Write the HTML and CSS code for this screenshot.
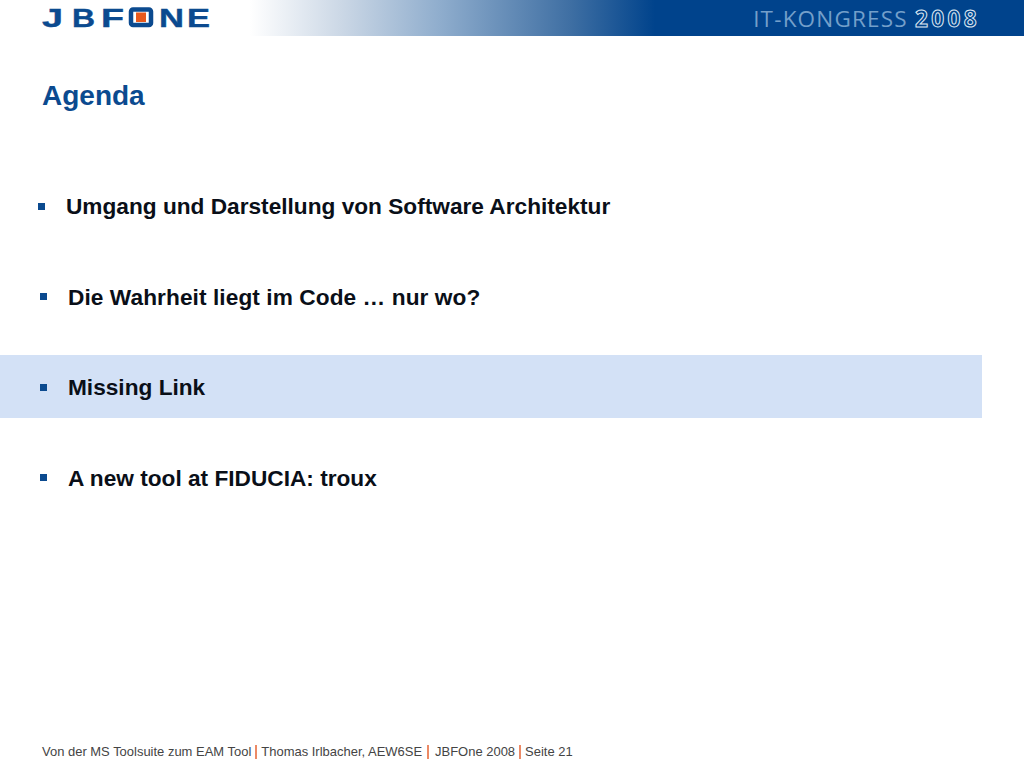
FILE: index.html
```html
<!DOCTYPE html>
<html lang="de">
<head>
<meta charset="utf-8">
<title>Agenda</title>
<link rel="stylesheet" href="styles.css">
</head>
<body>
<div class="slide">
  <header class="banner">
    <svg width="170" height="36" viewBox="0 0 170 36" class="logo-svg">
      <text x="1" y="27" class="logo-text" textLength="21" lengthAdjust="spacingAndGlyphs">J</text>
      <text x="31" y="27" class="logo-text" textLength="23" lengthAdjust="spacingAndGlyphs">B</text>
      <text x="60" y="27" class="logo-text" textLength="23" lengthAdjust="spacingAndGlyphs">F</text>
      <rect x="90" y="9.5" width="20" height="15.5" rx="2" fill="#fff" stroke="#0b4a8f" stroke-width="4.5"/>
      <rect x="95" y="12.5" width="10" height="9.5" fill="#e8591c"/>
      <text x="118" y="27" class="logo-text" textLength="25" lengthAdjust="spacingAndGlyphs">N</text>
      <text x="146" y="27" class="logo-text" textLength="23" lengthAdjust="spacingAndGlyphs">E</text>
    </svg>
    <div class="congress"><span class="congress-name">IT-KONGRESS</span> <span class="congress-year">2008</span></div>
  </header>
  <h1 class="title">Agenda</h1>
  <ul class="agenda">
    <li class="item item-first">Umgang und Darstellung von Software Architektur</li>
    <li class="item item-loose">Die Wahrheit liegt im Code … nur wo?</li>
    <li class="item item-active">Missing Link</li>
    <li class="item">A new tool at FIDUCIA: troux</li>
  </ul>
  <footer class="footer">
    <span>Von der MS Toolsuite zum EAM Tool</span><i class="sep"></i><span>Thomas Irlbacher, AEW6SE</span><i class="sep sep-wide"></i><span>JBFOne 2008</span><i class="sep"></i><span>Seite 21</span>
  </footer>
</div>
</body>
</html>
```
FILE: styles.css
```css
* { box-sizing: border-box; }
html, body { margin: 0; padding: 0; }
body { background: #fff; font-family: "Liberation Sans", Arial, sans-serif; }
.slide { width: 1024px; height: 768px; display: flex; flex-direction: column; overflow: hidden; position: relative; }
.banner {
  height: 36px; flex: none; display: flex; align-items: center; justify-content: space-between;
  padding: 0 47px 0 41px;
  background: linear-gradient(90deg, #fff 250px, #ccd8e6 340px, #8fadcd 440px, #3f6fa3 570px, #00438c 655px);
}
.logo-svg { display: block; }
.logo-text { font: 700 25px "Liberation Sans", sans-serif; fill: #0b4a8f; stroke: #0b4a8f; stroke-width: 0.4px; }
.congress { font-family: "Open Sans", sans-serif; font-size: 22.5px; letter-spacing: 1.2px; white-space: nowrap; }
.congress-name { color: #739fca; }
.congress-year { color: #00438c; font-weight: 700; letter-spacing: 3.4px; margin-right: -3px; -webkit-text-stroke: 1px #dfe9f3; }
.title { margin: 43px 0 0 42px; font-size: 28px; line-height: 34px; font-weight: 700; color: #0b4a8f; }
.agenda { list-style: none; margin: 0; padding: 0; margin-top: 61px; display: flex; flex-direction: column; gap: 27.5px; }
.item {
  height: 63px; width: 982px; display: flex; align-items: center; padding: 2px 0 0 68px; position: relative;
  font-size: 22.67px; font-weight: 700; color: #0a0f18;
}
.item::before { content: ""; position: absolute; left: 40px; top: 28.5px; width: 7px; height: 7px; background: #0b4a8f; }
.item-first { padding-left: 66px; }
.item-first::before { left: 38px; }
.item-loose { letter-spacing: 0.08px; }
.item-active { background: #d3e1f6; padding-top: 1px; }
.footer { position: absolute; left: 42px; top: 744px; display: flex; align-items: center; font-size: 12.97px; line-height: 16px; color: #444; }
.sep { width: 2px; height: 14px; background: #ec8a66; margin: 0 4px; }
.sep-wide { margin: 0 6px 0 5px; }
```
